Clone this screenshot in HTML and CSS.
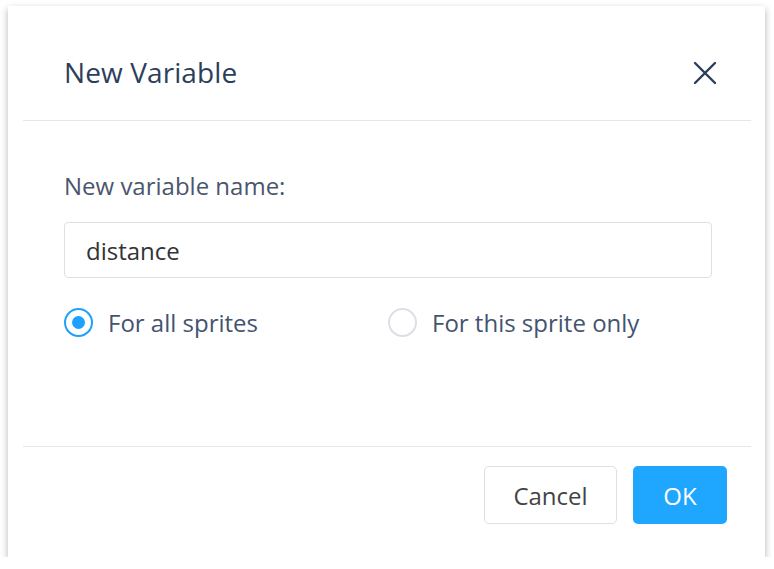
FILE: index.html
```html
<!DOCTYPE html>
<html>
<head>
<meta charset="utf-8">
<link rel="stylesheet" href="styles.css">
</head>
<body>
<div class="dialog">
  <div class="header">
    <div class="title">New Variable</div>
    <svg class="close" width="24" height="24" viewBox="0 0 24 24"><path d="M2 2 L22 22 M22 2 L2 22" stroke="#2b3d5c" stroke-width="2.4" fill="none" stroke-linecap="round"/></svg>
  </div>
  <div class="body">
    <div class="label">New variable name:</div>
    <div class="input">distance</div>
    <div class="radios">
      <div class="radio-item"><span class="radio checked"></span><span class="radio-label">For all sprites</span></div>
      <div class="radio-item"><span class="radio"></span><span class="radio-label">For this sprite only</span></div>
    </div>
  </div>
  <div class="footer">
    <div class="btn cancel">Cancel</div>
    <div class="btn ok">OK</div>
  </div>
</div>
</body>
</html>
```
FILE: styles.css
```css
html, body { margin: 0; padding: 0; background: #ffffff; }
body { font-family: "Open Sans", "Noto Sans", sans-serif; padding: 6px 0 0 8px; }
.dialog {
  width: 757px; height: 551px; box-sizing: border-box;
  background: #fff;
  box-shadow: 0 3px 7px rgba(0,0,0,0.3);
  padding: 0 14px 0 15px;
  display: flex; flex-direction: column;
}
.header {
  height: 115px; box-sizing: border-box;
  border-bottom: 1px solid #e4e7ed;
  padding: 48px 34px 0 41px;
  display: flex; justify-content: space-between; align-items: flex-start;
}
.title { font-size: 28px; line-height: 36px; color: #2c3e5c; font-weight: 500; letter-spacing: 0.1px; }
.close { margin-top: 7px; }
.body { flex: 1; padding: 49px 39px 0 41px; }
.label { font-size: 24px; line-height: 32px; color: #4a566e; }
.input {
  margin-top: 20px; height: 56px; box-sizing: border-box;
  border: 1px solid #dcdfe6; border-radius: 4px;
  padding: 0 21px; display: flex; align-items: center;
  font-size: 24px; color: #333;
}
.radios { margin-top: 29px; display: grid; grid-template-columns: 1fr 1fr; }
.radio-item { display: flex; align-items: center; height: 30px; }
.radio {
  width: 29px; height: 29px; box-sizing: border-box; border-radius: 50%;
  border: 2px solid #dcdfe6; margin-right: 15px; position: relative; flex: none;
}
.radio.checked { border: 2.5px solid #1da1ff; }
.radio.checked::after {
  content: ""; position: absolute; left: 50%; top: 50%;
  width: 13px; height: 13px; margin: -6.5px 0 0 -6.5px;
  border-radius: 50%; background: #1da1ff;
}
.radio-label { font-size: 24px; color: #44546e; }
.footer {
  border-top: 1px solid #e4e7ed;
  padding: 19px 24px 33px 0;
  display: flex; justify-content: flex-end; gap: 16px;
}
.btn {
  height: 58px; box-sizing: border-box; border-radius: 5px;
  display: flex; align-items: center; justify-content: center;
  font-size: 24px;
}
.cancel { width: 133px; border: 1px solid #dcdfe6; color: #444; background: #fff; }
.ok { width: 94px; background: #1fa6ff; color: #fff; }
```
